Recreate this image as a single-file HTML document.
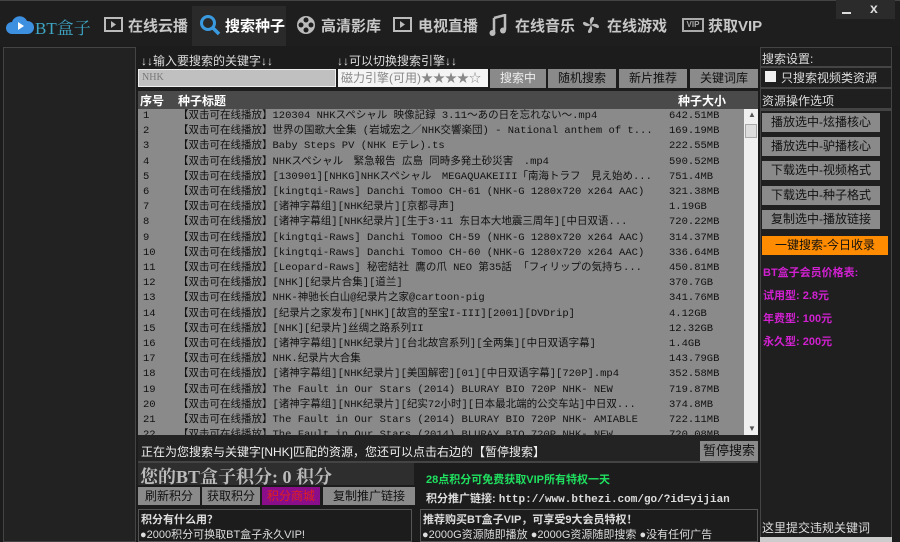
<!DOCTYPE html>
<html><head><meta charset="utf-8"><style>
*{margin:0;padding:0;box-sizing:border-box}
body{width:900px;height:542px;background:#1c1c1c;position:relative;overflow:hidden;font-family:"Liberation Sans","Noto Sans CJK SC",sans-serif;font-size:12px;color:#ddd}
.a{position:absolute;white-space:nowrap}
.nav{font-size:15px;color:#c8c8c8;top:15px;font-weight:bold}
.btn{position:absolute;background:#8a8a8a;color:#111;text-align:center;font-size:12px}
.rbtn{position:absolute;left:762px;width:118px;height:19px;background:#8a8a8a;color:#111;text-align:center;font-size:12px;line-height:19px}
.row{position:absolute;left:138px;width:606px;height:15.2px;font-family:"Liberation Mono","Noto Sans CJK SC",monospace;font-size:10.5px;color:#111;line-height:15px}
.row span{position:absolute}
.pk{position:absolute;left:763px;color:#d020d0;font-size:11px;font-weight:bold}
</style></head><body>
<div class="a" style="left:0;top:0;width:900px;height:46px;background:#1e1e1e;border-top:1px solid #444"></div>
<!-- logo -->
<svg class="a" style="left:6px;top:16px" width="28" height="18" viewBox="0 0 28 18"><path d="M6 18a6 6 0 0 1 0-12a8 8 0 0 1 15-1a6.5 6.5 0 0 1 1 13z" fill="#3d8fe0"/><path d="M12 6l6 4-6 4z" fill="#fff"/></svg>
<div class="a" style="left:35px;top:14px;font-size:17px;color:#3fa7c6;font-family:'Liberation Serif','Noto Serif CJK SC',serif">BT盒子</div>
<svg class="a" style="left:104px;top:17px" width="19" height="15"><rect x="1" y="1" width="17" height="13" fill="none" stroke="#bbb" stroke-width="2"/><path d="M7 4l5 3.5-5 3.5z" fill="#bbb"/></svg>
<div class="a nav" style="left:128px">在线云播</div>
<div class="a" style="left:192px;top:6px;width:94px;height:40px;background:#2a2a2a"></div>
<svg class="a" style="left:199px;top:14px" width="23" height="23"><circle cx="9" cy="9" r="6.5" fill="none" stroke="#3a9ae0" stroke-width="3"/><path d="M14 14l6 6" stroke="#3a9ae0" stroke-width="3.5"/></svg>
<div class="a nav" style="left:225px;color:#fff">搜索种子</div>
<svg class="a" style="left:296px;top:15px" width="21" height="21"><circle cx="10" cy="10" r="9" fill="#bbb"/><circle cx="10" cy="5" r="2.5" fill="#1e1e1e"/><circle cx="10" cy="15" r="2.5" fill="#1e1e1e"/><circle cx="5" cy="10" r="2.5" fill="#1e1e1e"/><circle cx="15" cy="10" r="2.5" fill="#1e1e1e"/></svg>
<div class="a nav" style="left:321px">高清影库</div>
<svg class="a" style="left:393px;top:17px" width="19" height="15"><rect x="1" y="1" width="17" height="13" fill="none" stroke="#bbb" stroke-width="2"/><path d="M7 4l5 3.5-5 3.5z" fill="#bbb"/></svg>
<div class="a nav" style="left:418px">电视直播</div>
<svg class="a" style="left:489px;top:14px" width="18" height="22"><path d="M5 4l11-3v15M5 4v15" stroke="#bbb" stroke-width="2.5" fill="none"/><circle cx="3.5" cy="19" r="3" fill="#bbb"/><circle cx="14" cy="16.5" r="3" fill="#bbb"/></svg>
<div class="a nav" style="left:515px">在线音乐</div>
<svg class="a" style="left:581px;top:15px" width="20" height="20"><path d="M10 10C6 2 14 0 13 4zM10 10c8-4 10 4 6 3zM10 10c4 8-4 10-3 6zM10 10C2 14 0 6 4 7z" fill="#bbb"/></svg>
<div class="a nav" style="left:607px">在线游戏</div>
<div class="a" style="left:682px;top:18px;width:22px;height:14px;border:2px solid #aaa;font-size:8px;color:#aaa;line-height:10px;text-align:center;font-weight:bold">VIP</div>
<div class="a nav" style="left:708px">获取VIP</div>
<div class="a" style="left:836px;top:0;width:59px;height:19px;background:#2b2b2b"></div>
<div class="a" style="left:842px;top:12px;width:9px;height:2px;background:#ddd"></div>
<div class="a" style="left:870px;top:0;font-size:14px;color:#ddd;font-weight:bold">x</div>
<!-- left panel -->
<div class="a" style="left:3px;top:47px;width:133px;height:495px;background:#222;border:1px solid #444"></div>
<!-- main -->
<div class="a" style="left:138px;top:47px;width:620px;height:495px;background:#1c1c1c"></div>
<div class="a" style="left:141px;top:52px;font-size:12px;color:#ddd">↓↓输入要搜索的关键字↓↓</div>
<div class="a" style="left:337px;top:52px;font-size:12px;color:#ddd">↓↓可以切换搜索引擎↓↓</div>
<div class="a" style="left:138px;top:69px;width:198px;height:18px;background:#c0c0c0;border:1px solid #eee;font-size:10px;color:#777;padding-left:3px;line-height:16px;font-family:'Liberation Serif',serif">NHK</div>
<div class="a" style="left:338px;top:69px;width:150px;height:18px;background:#f4f4f4;font-size:12px;color:#888;padding-left:3px;line-height:18px">磁力引擎(可用)★★★★☆</div>
<div class="btn" style="left:490px;top:69px;width:56px;height:19px;line-height:19px;color:#eee">搜索中</div>
<div class="btn" style="left:548px;top:69px;width:68px;height:19px;line-height:19px">随机搜索</div>
<div class="btn" style="left:619px;top:69px;width:68px;height:19px;line-height:19px">新片推荐</div>
<div class="btn" style="left:690px;top:69px;width:68px;height:19px;line-height:19px">关键词库</div>
<div class="a" style="left:138px;top:91px;width:620px;height:18px;background:#4a4a4a"></div>
<div class="a" style="left:140px;top:92px;font-size:12px;color:#fff;font-weight:bold">序号</div>
<div class="a" style="left:178px;top:92px;font-size:12px;color:#fff;font-weight:bold">种子标题</div>
<div class="a" style="left:678px;top:92px;font-size:12px;color:#fff;font-weight:bold">种子大小</div>
<div class="a" style="left:138px;top:109px;width:606px;height:326px;background:#8a8a8a"></div>
<div class="a" style="left:744px;top:109px;width:14px;height:326px;background:#f0f0f0"></div>
<div class="a" style="left:745px;top:124px;width:12px;height:14px;background:#ddd;border:1px solid #aaa"></div>
<div class="a" style="left:748px;top:110px;font-size:8px;color:#555">▲</div>
<div class="a" style="left:748px;top:424px;font-size:8px;color:#555">▼</div>
<div id="rows"></div>
<div class="row" style="top:109px"><span style="left:5px">1</span><span style="left:40px">【双击可在线播放】120304 NHKスペシャル 映像記録 3.11～あの日を忘れない～.mp4</span><span style="left:531px">642.51MB</span></div>
<div class="row" style="top:124.2px"><span style="left:5px">2</span><span style="left:40px">【双击可在线播放】世界の国歌大全集 (岩城宏之／NHK交響楽団) - National anthem of t...</span><span style="left:531px">169.19MB</span></div>
<div class="row" style="top:139.4px"><span style="left:5px">3</span><span style="left:40px">【双击可在线播放】Baby Steps PV (NHK Eテレ).ts</span><span style="left:531px">222.55MB</span></div>
<div class="row" style="top:154.6px"><span style="left:5px">4</span><span style="left:40px">【双击可在线播放】NHKスペシャル　緊急報告 広島 同時多発土砂災害　.mp4</span><span style="left:531px">590.52MB</span></div>
<div class="row" style="top:169.8px"><span style="left:5px">5</span><span style="left:40px">【双击可在线播放】[130901][NHKG]NHKスペシャル　MEGAQUAKEIII「南海トラフ　見え始め...</span><span style="left:531px">751.4MB</span></div>
<div class="row" style="top:185px"><span style="left:5px">6</span><span style="left:40px">【双击可在线播放】[kingtqi-Raws] Danchi Tomoo CH-61 (NHK-G 1280x720 x264 AAC)</span><span style="left:531px">321.38MB</span></div>
<div class="row" style="top:200.2px"><span style="left:5px">7</span><span style="left:40px">【双击可在线播放】[诸神字幕组][NHK纪录片][京都寻声]</span><span style="left:531px">1.19GB</span></div>
<div class="row" style="top:215.4px"><span style="left:5px">8</span><span style="left:40px">【双击可在线播放】[诸神字幕组][NHK纪录片][生于3·11 东日本大地震三周年][中日双语...</span><span style="left:531px">720.22MB</span></div>
<div class="row" style="top:230.6px"><span style="left:5px">9</span><span style="left:40px">【双击可在线播放】[kingtqi-Raws] Danchi Tomoo CH-59 (NHK-G 1280x720 x264 AAC)</span><span style="left:531px">314.37MB</span></div>
<div class="row" style="top:245.8px"><span style="left:5px">10</span><span style="left:40px">【双击可在线播放】[kingtqi-Raws] Danchi Tomoo CH-60 (NHK-G 1280x720 x264 AAC)</span><span style="left:531px">336.64MB</span></div>
<div class="row" style="top:261px"><span style="left:5px">11</span><span style="left:40px">【双击可在线播放】[Leopard-Raws] 秘密結社 鷹の爪 NEO 第35話 「フィリップの気持ち...</span><span style="left:531px">450.81MB</span></div>
<div class="row" style="top:276.2px"><span style="left:5px">12</span><span style="left:40px">【双击可在线播放】[NHK][纪录片合集][道兰]</span><span style="left:531px">370.7GB</span></div>
<div class="row" style="top:291.4px"><span style="left:5px">13</span><span style="left:40px">【双击可在线播放】NHK-神驰长白山@纪录片之家@cartoon-pig</span><span style="left:531px">341.76MB</span></div>
<div class="row" style="top:306.6px"><span style="left:5px">14</span><span style="left:40px">【双击可在线播放】[纪录片之家发布][NHK][故宫的至宝I-III][2001][DVDrip]</span><span style="left:531px">4.12GB</span></div>
<div class="row" style="top:321.8px"><span style="left:5px">15</span><span style="left:40px">【双击可在线播放】[NHK][纪录片]丝绸之路系列II</span><span style="left:531px">12.32GB</span></div>
<div class="row" style="top:337px"><span style="left:5px">16</span><span style="left:40px">【双击可在线播放】[诸神字幕组][NHK纪录片][台北故宫系列][全两集][中日双语字幕]</span><span style="left:531px">1.4GB</span></div>
<div class="row" style="top:352.2px"><span style="left:5px">17</span><span style="left:40px">【双击可在线播放】NHK.纪录片大合集</span><span style="left:531px">143.79GB</span></div>
<div class="row" style="top:367.4px"><span style="left:5px">18</span><span style="left:40px">【双击可在线播放】[诸神字幕组][NHK纪录片][美国解密][01][中日双语字幕][720P].mp4</span><span style="left:531px">352.58MB</span></div>
<div class="row" style="top:382.6px"><span style="left:5px">19</span><span style="left:40px">【双击可在线播放】The Fault in Our Stars (2014) BLURAY BIO 720P NHK- NEW</span><span style="left:531px">719.87MB</span></div>
<div class="row" style="top:397.8px"><span style="left:5px">20</span><span style="left:40px">【双击可在线播放】[诸神字幕组][NHK纪录片][纪实72小时][日本最北端的公交车站]中日双...</span><span style="left:531px">374.8MB</span></div>
<div class="row" style="top:413px"><span style="left:5px">21</span><span style="left:40px">【双击可在线播放】The Fault in Our Stars (2014) BLURAY BIO 720P NHK- AMIABLE</span><span style="left:531px">722.11MB</span></div>
<div class="row" style="top:428.2px;height:6.8px;overflow:hidden"><span style="left:5px">22</span><span style="left:40px">【双击可在线播放】The Fault in Our Stars (2014) BLURAY BIO 720P NHK- NEW</span><span style="left:531px">720.08MB</span></div>
<div class="a" style="left:138px;top:435px;width:620px;height:28px;background:#232323;border-bottom:2px solid #444"></div>
<div class="a" style="left:141px;top:443px;font-size:12px;color:#eee">正在为您搜索与关键字[NHK]匹配的资源，您还可以点击右边的【暂停搜索】</div>
<div class="btn" style="left:700px;top:441px;width:58px;height:20px;line-height:20px;font-size:13px">暂停搜索</div>
<div class="a" style="left:138px;top:463px;width:276px;height:22px;background:#2e2e2e"></div>
<div class="a" style="left:140px;top:463px;font-size:18px;font-weight:bold;color:#bbb;font-family:'Liberation Serif','Noto Serif CJK SC',serif">您的BT盒子积分: 0 积分</div>
<div class="btn" style="left:138px;top:487px;width:62px;height:18px;line-height:18px">刷新积分</div>
<div class="btn" style="left:202px;top:487px;width:58px;height:18px;line-height:18px">获取积分</div>
<div class="btn" style="left:262px;top:487px;width:58px;height:18px;line-height:18px;background:#8a0e8a;color:#e02020">积分商城</div>
<div class="btn" style="left:323px;top:487px;width:92px;height:18px;line-height:18px">复制推广链接</div>
<div class="a" style="left:426px;top:471px;font-size:11px;font-weight:bold;color:#20e060">28点积分可免费获取VIP所有特权一天</div>
<div class="a" style="left:426px;top:490px;font-size:11px;font-weight:bold;color:#ddd">积分推广链接: <span style="font-family:'Liberation Mono',monospace">http://www.bthezi.com/go/?id=yijian</span></div>
<div class="a" style="left:138px;top:509px;width:274px;height:33px;border:1px solid #555;background:#1c1c1c"></div>
<div class="a" style="left:141px;top:511px;font-size:11px;font-weight:bold;color:#ddd">积分有什么用？</div>
<div class="a" style="left:140px;top:526px;font-size:11px;color:#ddd">●2000积分可换取BT盒子永久VIP!</div>
<div class="a" style="left:420px;top:509px;width:338px;height:33px;border:1px solid #555"></div>
<div class="a" style="left:423px;top:511px;font-size:11px;font-weight:bold;color:#ddd">推荐购买BT盒子VIP，可享受9大会员特权！</div>
<div class="a" style="left:422px;top:526px;font-size:11px;color:#ddd">●2000G资源随即播放 ●2000G资源随即搜索 ●没有任何广告</div>
<!-- right -->
<div class="a" style="left:760px;top:47px;width:132px;height:495px;background:#1f1f1f;border:1px solid #444"></div>
<div class="a" style="left:762px;top:50px;font-size:12px;color:#ddd">搜索设置:</div>
<div class="a" style="left:760px;top:66px;width:132px;height:2px;background:#444"></div>
<div class="a" style="left:765px;top:71px;width:11px;height:11px;background:#f0f0f0"></div>
<div class="a" style="left:781px;top:69px;font-size:12px;color:#ddd">只搜索视频类资源</div>
<div class="a" style="left:760px;top:87px;width:132px;height:2px;background:#444"></div>
<div class="a" style="left:762px;top:92px;font-size:12px;color:#ddd">资源操作选项</div>
<div class="a" style="left:760px;top:108px;width:132px;height:3px;background:#444"></div>
<div class="rbtn" style="top:113px">播放选中-炫播核心</div>
<div class="rbtn" style="top:137px">播放选中-驴播核心</div>
<div class="rbtn" style="top:161px">下载选中-视频格式</div>
<div class="rbtn" style="top:186px">下载选中-种子格式</div>
<div class="rbtn" style="top:210px">复制选中-播放链接</div>
<div class="rbtn" style="top:236px;background:#ff8c00;width:126px">一键搜索-今日收录</div>
<div class="pk" style="top:264px">BT盒子会员价格表:</div>
<div class="pk" style="top:287px">试用型: 2.8元</div>
<div class="pk" style="top:310px">年费型: 100元</div>
<div class="pk" style="top:333px">永久型: 200元</div>
<div class="a" style="left:762px;top:519px;font-size:12px;color:#ddd">这里提交违规关键词</div>
<div class="a" style="left:760px;top:537px;width:132px;height:5px;background:#ccc"></div>
</body></html>
